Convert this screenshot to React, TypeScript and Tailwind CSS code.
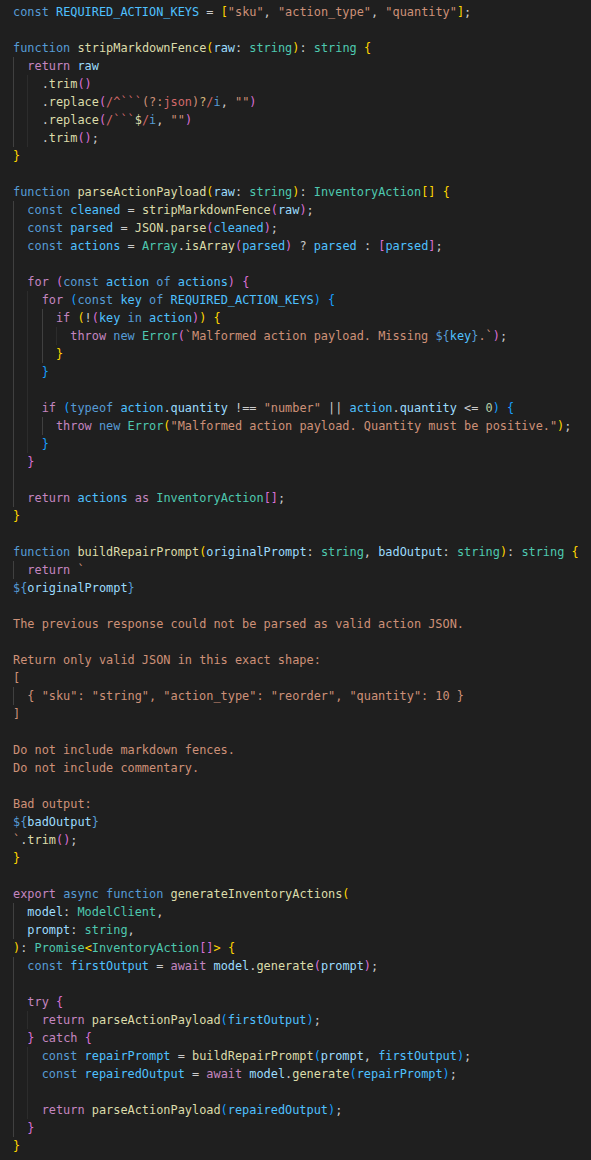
const COLORS: Record<string, string> = {
  k: "text-[#569cd6]",
  c: "text-[#c586c0]",
  f: "text-[#dcdcaa]",
  v: "text-[#9cdcfe]",
  C: "text-[#4fc1ff]",
  s: "text-[#ce9178]",
  t: "text-[#4ec9b0]",
  n: "text-[#b5cea8]",
  r: "text-[#d16969]",
  q: "text-[#d7ba7d]",
  p: "text-[#cccccc]",
};

const BRACKETS = ["text-[#ffd700]", "text-[#da70d6]", "text-[#179fff]"];

// each line: leading spaces = indent, segments split by §, "x:" prefix = token kind
const SOURCE: string[] = [
  'k:const§ §C:REQUIRED_ACTION_KEYS§ = §B:[§s:"sku"§, §s:"action_type"§, §s:"quantity"§B:]§;',
  '',
  'k:function§ §f:stripMarkdownFence§B:(§v:raw§: §t:string§B:)§: §t:string§ §B:{',
  '  c:return§ §v:raw',
  '    .§f:trim§B:()',
  '    .§f:replace§B:(§r:/^```§s:(?:§r:json§s:)§q:?§r:/§k:i§, §s:""§B:)',
  '    .§f:replace§B:(§r:/```§f:$§r:/§k:i§, §s:""§B:)',
  '    .§f:trim§B:()§;',
  'B:}',
  '',
  'k:function§ §f:parseActionPayload§B:(§v:raw§: §t:string§B:)§: §t:InventoryAction§B:[]§ §B:{',
  '  k:const§ §C:cleaned§ = §f:stripMarkdownFence§B:(§v:raw§B:)§;',
  '  k:const§ §C:parsed§ = §f:JSON§.§f:parse§B:(§C:cleaned§B:)§;',
  '  k:const§ §C:actions§ = §t:Array§.§f:isArray§B:(§C:parsed§B:)§ ? §C:parsed§ : §B:[§C:parsed§B:]§;',
  '',
  '  c:for§ §B:(§k:const§ §C:action§ §k:of§ §C:actions§B:)§ §B:{',
  '    c:for§ §B:(§k:const§ §C:key§ §k:of§ §C:REQUIRED_ACTION_KEYS§B:)§ §B:{',
  '      c:if§ §B:(§!§B:(§C:key§ §k:in§ §C:action§B:))§ §B:{',
  '        c:throw§ §k:new§ §t:Error§B:(§s:`Malformed action payload. Missing §k:${§C:key§k:}§s:.`§B:)§;',
  '      B:}',
  '    B:}',
  '',
  '    c:if§ §B:(§k:typeof§ §C:action§.§v:quantity§ !== §s:"number"§ || §C:action§.§v:quantity§ <= §n:0§B:)§ §B:{',
  '      c:throw§ §k:new§ §t:Error§B:(§s:"Malformed action payload. Quantity must be positive."§B:)§;',
  '    B:}',
  '  B:}',
  '',
  '  c:return§ §C:actions§ §c:as§ §t:InventoryAction§B:[]§;',
  'B:}',
  '',
  'k:function§ §f:buildRepairPrompt§B:(§v:originalPrompt§: §t:string§, §v:badOutput§: §t:string§B:)§: §t:string§ §B:{',
  '  c:return§ §s:`',
  'k:${§v:originalPrompt§k:}',
  '',
  's:The previous response could not be parsed as valid action JSON.',
  '',
  's:Return only valid JSON in this exact shape:',
  's:[',
  '  s:{ "sku": "string", "action_type": "reorder", "quantity": 10 }',
  's:]',
  '',
  's:Do not include markdown fences.',
  's:Do not include commentary.',
  '',
  's:Bad output:',
  'k:${§v:badOutput§k:}',
  's:`§.§f:trim§B:()§;',
  'B:}',
  '',
  'c:export§ §k:async§ §k:function§ §f:generateInventoryActions§B:(',
  '  v:model§: §t:ModelClient§,',
  '  v:prompt§: §t:string§,',
  'B:)§: §t:Promise§B:<§t:InventoryAction§B:[]>§ §B:{',
  '  k:const§ §C:firstOutput§ = §c:await§ §v:model§.§f:generate§B:(§v:prompt§B:)§;',
  '',
  '  c:try§ §B:{',
  '    c:return§ §f:parseActionPayload§B:(§C:firstOutput§B:)§;',
  '  B:}§ §c:catch§ §B:{',
  '    k:const§ §C:repairPrompt§ = §f:buildRepairPrompt§B:(§v:prompt§, §C:firstOutput§B:)§;',
  '    k:const§ §C:repairedOutput§ = §c:await§ §v:model§.§f:generate§B:(§C:repairPrompt§B:)§;',
  '',
  '    c:return§ §f:parseActionPayload§B:(§C:repairedOutput§B:)§;',
  '  B:}',
  'B:}',
];

interface Token {
  text: string;
  cls: string;
}

interface Line {
  indent: number;
  tokens: Token[];
}

function tokenize(source: string[]): Line[] {
  let depth = 0;
  const raw = source.map((src) => {
    const body = src.trimStart();
    const indent = body.length ? (src.length - body.length) / 2 : -1;
    const tokens: Token[] = [];
    if (body.length) {
      for (const seg of body.split("§")) {
        const m = seg.match(/^([a-zA-Z]):([\s\S]*)$/);
        const kind = m ? m[1] : "p";
        const text = m ? m[2] : seg;
        if (kind === "B") {
          for (const ch of text) {
            if ("([{<".includes(ch)) {
              tokens.push({ text: ch, cls: BRACKETS[depth % 3] });
              depth++;
            } else {
              depth = Math.max(0, depth - 1);
              tokens.push({ text: ch, cls: BRACKETS[depth % 3] });
            }
          }
        } else {
          tokens.push({ text, cls: COLORS[kind] });
        }
      }
    }
    return { indent, tokens };
  });

  // blank lines take the smaller indent of their neighbours
  return raw.map((line, i) => {
    if (line.indent >= 0) return line;
    let prev = 0;
    for (let j = i - 1; j >= 0; j--) if (raw[j].indent >= 0) { prev = raw[j].indent; break; }
    let next = 0;
    for (let j = i + 1; j < raw.length; j++) if (raw[j].indent >= 0) { next = raw[j].indent; break; }
    return { indent: Math.min(prev, next), tokens: [] };
  });
}

const LINES = tokenize(SOURCE);

function CodeLine({ line }: { line: Line }) {
  return (
    <div className="flex h-[18px] leading-[18px] whitespace-pre">
      {Array.from({ length: line.indent }).map((_, i) => (
        <span
          key={i}
          className={
            i % 2 === 0
              ? "w-[2ch] shrink-0 border-l border-[#404040]"
              : "w-[2ch] shrink-0 border-l border-[#2c2c2c]"
          }
        />
      ))}
      {line.tokens.map((tok, i) => (
        <span key={i} className={tok.cls}>
          {tok.text}
        </span>
      ))}
    </div>
  );
}

export default function App() {
  return (
    <div className="min-h-screen w-full bg-[#1f1f1f] pl-[13px] pt-[3px] font-['DejaVu_Sans_Mono',monospace] text-[11.9px] text-[#cccccc]">
      {LINES.map((line, i) => (
        <CodeLine key={i} line={line} />
      ))}
    </div>
  );
}
